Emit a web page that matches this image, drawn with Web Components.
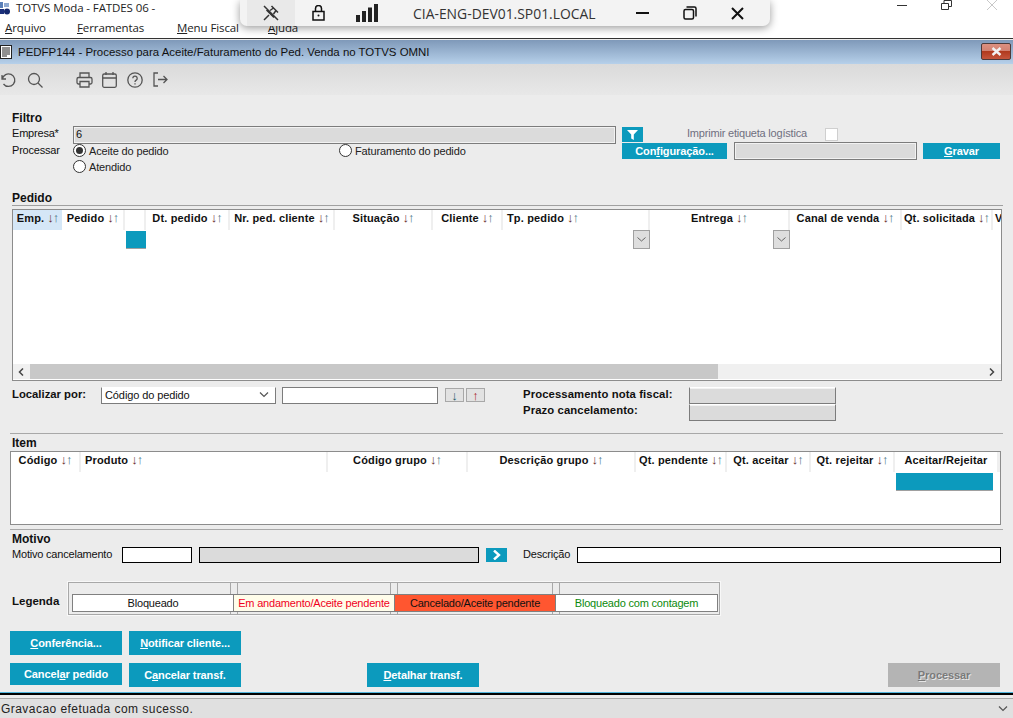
<!DOCTYPE html>
<html lang="pt-BR">
<head>
<meta charset="utf-8">
<title>PEDFP144</title>
<style>
  html, body { margin: 0; padding: 0; height: 718px; overflow: hidden; background: #ececec; }
  body { font: 11px "Liberation Sans", Arial, sans-serif; color: #111; }
</style>
</head>
<body>
<tv-app>
  <win-chrome></win-chrome>
  <rdp-bar></rdp-bar>
  <form-title>PEDFP144 - Processo para Aceite/Faturamento do Ped. Venda no TOTVS OMNI</form-title>
  <tool-bar></tool-bar>
  <form-body>
    <sec-head style="margin:16px 0 0 12px">Filtro</sec-head>
    <form-row h="17" style="margin-left:12px">
      <tv-label w="61">Empresa*</tv-label>
      <tv-input w="543" h="18" kind="off">6</tv-input>
      <tv-button w="21" h="15" style="margin:1px 0 0 6px"><svg width="11" height="11" viewBox="0 0 11 11"><path d="M0 1h11L6.800 5.600V11L4.200 9.400V5.600z" fill="#fff"/></svg></tv-button>
      <tv-label w="138" style="margin-left:44px;color:#6f6f80">Imprimir etiqueta logística</tv-label>
      <tv-check></tv-check>
    </form-row>
    <form-row h="17" style="margin-left:12px">
      <tv-label w="61">Processar</tv-label>
      <tv-radio w="266" checked>Aceite do pedido</tv-radio>
      <tv-radio w="283">Faturamento do pedido</tv-radio>
      <tv-button w="105" h="16">Con<u>f</u>iguração...</tv-button>
      <tv-input w="183" h="18" kind="off" style="margin:-1px 0 0 7px"></tv-input>
      <tv-button w="77" h="16" style="margin-left:6px"><u>G</u>ravar</tv-button>
    </form-row>
    <form-row h="15" style="margin:-1px 0 0 73px">
      <tv-radio w="100">Atendido</tv-radio>
    </form-row>

    <sec-head lined style="margin:17px 0 0 12px;width:991px">Pedido</sec-head>
    <data-table style="margin:3px 0 0 12px;width:990px;height:172px"
      cols="49 63 21 84 105 98 70 147 140 112 91 8">
      <col-head active sort>Emp.</col-head>
      <col-head sort>Pedido</col-head>
      <col-head></col-head>
      <col-head sort>Dt. pedido</col-head>
      <col-head sort>Nr. ped. cliente</col-head>
      <col-head sort>Situação</col-head>
      <col-head sort>Cliente</col-head>
      <col-head sort left>Tp. pedido</col-head>
      <col-head sort>Entrega</col-head>
      <col-head sort>Canal de venda</col-head>
      <col-head sort>Qt. solicitada</col-head>
      <col-head left last>V</col-head>
      <row-mark slot="row" col="3"></row-mark>
      <row-drop slot="row" col="8"></row-drop>
      <row-drop slot="row" col="9"></row-drop>
      <h-scroll slot="foot"></h-scroll>
    </data-table>

    <form-row h="34" style="margin:6px 0 0 12px">
      <tv-label w="89" bold>Localizar por:</tv-label>
      <tv-select w="175">Código do pedido</tv-select>
      <tv-input w="156" h="17" style="margin-left:6px"></tv-input>
      <arrow-btn dir="down" style="margin:1px 0 0 7px"></arrow-btn>
      <arrow-btn dir="up" style="margin:1px 0 0 2px"></arrow-btn>
      <info-pair style="margin-left:38px"></info-pair>
    </form-row>

    <sec-line style="margin:12px 0 0 10px;width:993px"></sec-line>
    <sec-head style="margin:2px 0 0 12px">Item</sec-head>
    <data-table style="margin:0 0 0 10px;width:991px;height:74px"
      cols="70 247 140 168 91 84 84 104 2">
      <col-head sort>Código</col-head>
      <col-head sort left>Produto</col-head>
      <col-head sort>Código grupo</col-head>
      <col-head sort>Descrição grupo</col-head>
      <col-head sort>Qt. pendente</col-head>
      <col-head sort>Qt. aceitar</col-head>
      <col-head sort>Qt. rejeitar</col-head>
      <col-head>Aceitar/Rejeitar</col-head>
      <col-head></col-head>
      <row-mark slot="row" col="8" wide></row-mark>
    </data-table>

    <sec-line style="margin:4px 0 0 10px;width:993px"></sec-line>
    <sec-head style="margin:2px 0 0 12px">Motivo</sec-head>
    <form-row h="16" style="margin:0 0 0 12px">
      <tv-label w="110">Motivo cancelamento</tv-label>
      <tv-input w="70" h="16" kind="dark"></tv-input>
      <tv-input w="280" h="16" kind="dark-off" style="margin-left:7px"></tv-input>
      <tv-button w="21" h="14" style="margin:1px 0 0 7px"><svg width="10" height="10" viewBox="0 0 10 10"><path d="M2 .5 7 5 2 9.500" fill="none" stroke="#fff" stroke-width="2.400"/></svg></tv-button>
      <tv-label w="54" style="margin-left:16px">Descrição</tv-label>
      <tv-input w="424" h="16" kind="dark"></tv-input>
    </form-row>

    <form-row h="33" style="margin:19px 0 0 12px">
      <tv-label w="56" bold style="margin-top:12px;letter-spacing:0;font-size:11.500px">Legenda</tv-label>
      <legend-box>
        <legend-cell w="162">Bloqueado</legend-cell>
        <legend-cell w="161" style="background:#fffdea;color:#f0001c">Em andamento/Aceite pendente</legend-cell>
        <legend-cell w="161" style="background:#ff5630;color:#111">Cancelado/Aceite pendente</legend-cell>
        <legend-cell w="162" style="color:#0c8a0c">Bloqueado com contagem</legend-cell>
      </legend-box>
    </form-row>

    <form-row h="24" style="margin:16px 0 0 10px">
      <tv-button w="112" h="24"><u>C</u>onferência...</tv-button>
      <tv-button w="112" h="24" style="margin-left:7px"><u>N</u>otificar cliente...</tv-button>
    </form-row>
    <form-row h="24" style="margin:8px 0 0 10px">
      <tv-button w="112" h="22">Cancel<u>a</u>r pedido</tv-button>
      <tv-button w="112" h="24" style="margin-left:7px">C<u>a</u>ncelar transf.</tv-button>
      <tv-button w="112" h="24" style="margin-left:126px"><u>D</u>etalhar transf.</tv-button>
      <tv-button w="112" h="24" kind="off" style="margin-left:409px"><u>P</u>rocessar</tv-button>
    </form-row>
  </form-body>
  <status-bar>Gravacao efetuada com sucesso.</status-bar>
</tv-app>

<script>
// small helper, every element below makes its shadow root the same way
function shadow(el, html) {
  el.attachShadow({ mode: 'open' }).innerHTML = html;
}
function sized(el) {
  if (el.hasAttribute('w')) el.style.width = el.getAttribute('w') + 'px';
  if (el.hasAttribute('h')) el.style.height = el.getAttribute('h') + 'px';
}

class TvApp extends HTMLElement {
  connectedCallback() {
    shadow(this, `<style>
      :host { display: flex; flex-direction: column; position: relative; width: 1013px; height: 718px; overflow: hidden; }
    </style><slot></slot>`);
  }
}

class WinChrome extends HTMLElement {
  connectedCallback() {
    shadow(this, `<style>
      :host { display: block; height: 38px; background: #fff; border-bottom: 1px solid #333; margin-bottom: 1px; font: 11.500px "Open Sans", "Noto Sans", sans-serif; letter-spacing: -.1px; color: #222; }
      .title { display: flex; align-items: center; height: 14px; padding-top: 1px; }
      .title svg { margin-right: 6px; }
      .title span { line-height: 14px; }
      nav { display: flex; margin-top: 5px; line-height: 16px; }
      nav span { white-space: nowrap; }
      .ctl { position: absolute; top: 0; right: 0; height: 12px; }
      .ctl svg { position: absolute; top: 0; }
      u { text-underline-offset: 1px; }
    </style>
    <div class="title">
      <svg width="10" height="13" viewBox="0 0 10 13"><rect x="0" y="0" width="3" height="6" fill="#5a7fb8"/><rect x="4" y="1" width="5" height="4" fill="#8fa9d0"/><rect x="0" y="7" width="4" height="5" fill="#1b2f7a"/><circle cx="7" cy="9.500" r="3" fill="#14286e"/></svg>
      <span>TOTVS Moda - FATDES 06 -</span>
    </div>
    <nav>
      <span style="margin-left:5px;width:72px"><u>A</u>rquivo</span>
      <span style="width:100px"><u>F</u>erramentas</span>
      <span style="width:91px"><u>M</u>enu Fiscal</span>
      <span><u>A</u>juda</span>
    </nav>
    <div class="ctl" style="width:120px">
      <svg style="left:3px" width="12" height="10"><path d="M1 5.500h10" stroke="#333"/></svg>
      <svg style="left:48px" width="12" height="10"><path d="M.5 3.500h7v6h-7zM3 3V.5h7.500v6H8" fill="none" stroke="#333"/></svg>
      <svg style="left:93px" width="12" height="11"><path d="M1 0l10 10M11 0L1 10" stroke="#c8c8c8"/></svg>
    </div>`);
  }
}

class RdpBar extends HTMLElement {
  connectedCallback() {
    shadow(this, `<style>
      :host { position: absolute; left: 240px; top: 0; width: 530px; height: 26px; display: flex; align-items: center; background: #f3f3f3; border-radius: 0 0 7px 7px; box-shadow: 0 2px 8px rgba(0,0,0,.4); font: 13.900px "Open Sans", "Noto Sans", sans-serif; color: #333; }
      .pin { width: 48px; height: 26px; margin-left: 7px; background: #e9e9e9; display: flex; align-items: center; justify-content: center; }
      svg { display: block; flex: none; }
      .name { margin-left: 34px; width: 191px; white-space: nowrap; }
    </style>
    <div class="pin"><svg width="18" height="18" viewBox="0 0 18 18" fill="none" stroke="#333" stroke-width="1.500"><path d="M2 2 16 16M9.500 2 16 8.500M11.500 4 8 6.500M14 6.500 11.500 10M4.500 6 12 13.500M7 11l-5 5"/></svg></div>
    <svg style="margin-left:17px" width="13" height="16" viewBox="0 0 13 16" fill="none" stroke="#111" stroke-width="1.500"><rect x="1" y="6.500" width="11" height="8.500"/><path d="M3.500 6.500V3.500a3 3 0 0 1 6 0v3"/><circle cx="6.500" cy="10.500" r="1" fill="#111" stroke="none"/></svg>
    <svg style="margin-left:31px" width="23" height="18" viewBox="0 0 23 18" fill="#222"><rect x="0" y="11" width="4" height="7"/><rect x="6" y="7" width="4" height="11"/><rect x="12" y="3.500" width="4" height="14.500"/><rect x="18" y="0" width="4" height="18"/></svg>
    <span class="name">CIA-ENG-DEV01.SP01.LOCAL</span>
    <svg style="margin-left:32px" width="13" height="4"><path d="M0 2h13" stroke="#111" stroke-width="2"/></svg>
    <svg style="margin-left:34px" width="14" height="14" viewBox="0 0 14 14" fill="none" stroke="#111" stroke-width="1.500"><rect x="1" y="3.500" width="9.500" height="9.500" rx="1.500"/><path d="M3.500 1h8a1.500 1.500 0 0 1 1.500 1.500v8"/></svg>
    <svg style="margin-left:34px" width="13" height="13" viewBox="0 0 13 13"><path d="M1 1l11 11M12 1 1 12" stroke="#111" stroke-width="2"/></svg>`);
  }
}

class FormTitle extends HTMLElement {
  connectedCallback() {
    shadow(this, `<style>
      :host { display: flex; align-items: center; height: 24px; flex: none; position: relative; background: linear-gradient(#7f99b9, #b6d0ea); font: 11.450px "Liberation Sans", sans-serif; color: #111; }
      .doc { margin: 0 6px 0 0; }
      .close { position: absolute; right: 2px; top: 3px; width: 30px; height: 17px; box-sizing: border-box; border: 1px solid #4d3a3a; border-radius: 2px; background: linear-gradient(#dc9080 0, #d28272 45%, #b13a1e 50%, #c5553c 100%); display: flex; align-items: center; justify-content: center; }
    </style>
    <svg class="doc" width="12" height="14" viewBox="0 0 12 14"><rect x=".5" y=".5" width="11" height="13" fill="#fff" stroke="#222"/><path d="M2 3h8M2 5h8M2 7h8M2 9h8M2 11h5" stroke="#222"/></svg>
    <slot></slot>
    <div class="close"><svg width="11" height="9" viewBox="0 0 11 9"><path d="M1.500 1l8 7M9.500 1l-8 7" stroke="#f2f2f2" stroke-width="2.400"/></svg></div>`);
  }
}

class ToolBar extends HTMLElement {
  connectedCallback() {
    shadow(this, `<style>
      :host { display: flex; height: 31px; flex: none; align-items: center; background: linear-gradient(#dadada, #e8e8e8); box-sizing: border-box; }
      svg { display: block; fill: none; stroke: #555; stroke-width: 1.300; }
    </style>
    <svg style="margin-left:0" width="17" height="16" viewBox="0 0 16 16"><path d="M1.500 3v4h4M1.800 7A6.300 6.300 0 1 1 3 12"/></svg>
    <svg style="margin-left:10px" width="16" height="16" viewBox="0 0 16 16"><circle cx="7" cy="7" r="5.500"/><path d="M11 11l4.500 4.500"/></svg>
    <svg style="margin-left:33px" width="17" height="16" viewBox="0 0 17 16"><path d="M4 5V1h9v4M4 12H2.500A1.500 1.500 0 0 1 1 10.500V7A1.500 1.500 0 0 1 2.500 5.500h12A1.500 1.500 0 0 1 16 7v3.500a1.500 1.500 0 0 1-1.500 1.500H13M4 9.500h9V15H4z"/></svg>
    <svg style="margin-left:9px" width="15" height="16" viewBox="0 0 15 16"><rect x=".7" y="2" width="13.600" height="13.300" rx="1.500"/><path d="M.7 6h13.600M4 0v3M11 0v3"/></svg>
    <svg style="margin-left:10px" width="16" height="16" viewBox="0 0 16 16"><circle cx="8" cy="8" r="7.200"/><path d="M5.800 6.200a2.200 2.200 0 1 1 3.400 1.900c-.8.500-1.200 1-1.200 1.900M8 11.300v1.200"/></svg>
    <svg style="margin-left:10px" width="15" height="15" viewBox="0 0 15 15"><path d="M5 1H1v13h4M5 7.500h9M10.500 4l3.500 3.500L10.500 11"/></svg>`);
  }
}

class FormBody extends HTMLElement {
  connectedCallback() {
    shadow(this, `<style>
      :host { display: block; height: 597px; flex: none; overflow: hidden; background: #ececec; }
    </style><slot></slot>`);
  }
}

class SecHead extends HTMLElement {
  connectedCallback() {
    shadow(this, `<style>
      :host { display: block; font: bold 12px/15px "Liberation Sans", sans-serif; height: 15px; color: #111; }
      :host([lined]) { height: 14px; border-bottom: 1px solid #a0a0a0; }
    </style><slot></slot>`);
  }
}

class SecLine extends HTMLElement {
  connectedCallback() {
    shadow(this, `<style>:host { display: block; height: 0; border-top: 1px solid #a8a8a8; }</style>`);
  }
}

class FormRow extends HTMLElement {
  connectedCallback() {
    shadow(this, `<style>:host { display: flex; align-items: flex-start; }</style><slot></slot>`);
    sized(this);
  }
}

class TvLabel extends HTMLElement {
  connectedCallback() {
    shadow(this, `<style>
      :host { display: block; flex: none; line-height: 15px; white-space: nowrap; font-size: 11px; letter-spacing: -.2px; }
      :host([bold]) { font-weight: bold; font-size: 11.300px; letter-spacing: 0; }
    </style><slot></slot>`);
    sized(this);
  }
}

class TvInput extends HTMLElement {
  connectedCallback() {
    shadow(this, `<style>
      :host { display: block; flex: none; box-sizing: border-box; background: #fff; border: 1px solid #7c7c7c; padding-left: 2px; font-size: 11px; line-height: 15px; }
      :host([kind="off"]) { background: #dbdbdb; box-shadow: inset 0 0 0 1px #f2f2f2; }
      :host([kind="dark"]) { border-color: #000; }
      :host([kind="dark-off"]) { border-color: #000; background: #dbdbdb; }
    </style><slot></slot>`);
    sized(this);
  }
}

class TvSelect extends HTMLElement {
  connectedCallback() {
    shadow(this, `<style>
      :host { display: flex; flex: none; justify-content: space-between; align-items: center; box-sizing: border-box; height: 17px; background: #fff; border: 1px solid #7c7c7c; border-top-color: #fff; padding: 0 6px 1px 3px; font-size: 11px; letter-spacing: -.1px; }
      svg { display: block; }
    </style><slot></slot><svg width="10" height="6"><path d="M1 .5 5 4.500 9 .5" fill="none" stroke="#555" stroke-width="1.200"/></svg>`);
    sized(this);
  }
}

class TvRadio extends HTMLElement {
  connectedCallback() {
    shadow(this, `<style>
      :host { display: flex; flex: none; align-items: center; height: 15px; font-size: 11px; letter-spacing: -.15px; white-space: nowrap; color: #222; }
      .dot { box-sizing: border-box; width: 13px; height: 13px; border-radius: 50%; border: 1px solid #333; background: #fff; margin-right: 3px; display: flex; align-items: center; justify-content: center; }
      :host([checked]) .dot::after { content: ""; width: 7px; height: 7px; border-radius: 50%; background: #333; }
    </style><span class="dot"></span><slot></slot>`);
    sized(this);
  }
}

class TvCheck extends HTMLElement {
  connectedCallback() {
    shadow(this, `<style>
      :host { display: block; flex: none; box-sizing: border-box; width: 13px; height: 13px; margin-top: 2px; background: #fff; border: 1px solid #cfcfcf; }
    </style>`);
  }
}

class TvButton extends HTMLElement {
  connectedCallback() {
    shadow(this, `<style>
      :host { display: flex; flex: none; align-items: center; justify-content: center; background: #0c9abd; color: #fff; font: bold 11px "Liberation Sans", sans-serif; letter-spacing: -.1px; white-space: nowrap; }
      :host([kind="off"]) { background: #b4b4b4; color: #7a7a7a; text-shadow: 1px 1px 0 #e6e6e6; }
    </style><slot></slot>`);
    sized(this);
  }
}

class ArrowBtn extends HTMLElement {
  connectedCallback() {
    const down = this.getAttribute('dir') === 'down';
    shadow(this, `<style>
      :host { display: flex; flex: none; align-items: center; justify-content: center; box-sizing: border-box; width: 19px; height: 14px; background: #e2e2e2; border: 1px solid #a8a8a8; }
      span { font: bold 13px "Liberation Sans", sans-serif; }
    </style><span style="color:${down ? '#1c5f6a' : '#a81f1f'}">${down ? '↓' : '↑'}</span>`);
  }
}

class InfoPair extends HTMLElement {
  connectedCallback() {
    shadow(this, `<style>
      :host { display: grid; grid-template-columns: 166px 147px; grid-auto-rows: 17px; font: bold 11.300px/15px "Liberation Sans", sans-serif; letter-spacing: .1px; white-space: nowrap; }
      .box { box-sizing: border-box; background: #dbdbdb; border: 1px solid #7c7c7c; border-top-color: #fff; box-shadow: inset 0 1px 0 #f2f2f2; }
      .low { margin-top: -1px; }
    </style>
    <span>Processamento nota fiscal:</span><div class="box"></div>
    <span class="low">Prazo cancelamento:</span><div class="box"></div>`);
  }
}

class DataTable extends HTMLElement {
  connectedCallback() {
    const cols = this.getAttribute('cols').split(' ').map(c => c + 'px').join(' ');
    shadow(this, `<style>
      :host { display: flex; flex-direction: column; box-sizing: border-box; background: #fff; border: 1px solid #8c8c8c; overflow: hidden; }
      .head, .row { display: grid; grid-template-columns: ${cols}; flex: none; }
      .head { height: 20px; }
      .row { height: 19px; }
      .fill { flex: 1; }
    </style>
    <div class="head"><slot></slot></div>
    <div class="row"><slot name="row"></slot></div>
    <div class="fill"></div>
    <slot name="foot"></slot>`);
  }
}

class ColHead extends HTMLElement {
  connectedCallback() {
    const arrows = this.hasAttribute('sort')
      ? '<span class="dn">↓</span><span class="up">↑</span>' : '';
    shadow(this, `<style>
      :host { display: flex; justify-content: center; align-items: center; min-width: 0; overflow: hidden; border-right: 2px solid #efefef; box-sizing: border-box; font: bold 11px "Liberation Sans", sans-serif; letter-spacing: .15px; white-space: nowrap; color: #111; padding-bottom: 5px; }
      :host([left]) { justify-content: flex-start; padding-left: 4px; }
      :host([active]) { background: #d5e7f7; border-right: 0; }
      :host([last]) { border-right: 0; padding-left: 2px; }
      .arrows { margin-left: 3px; font: bold 13px/13px "Liberation Sans", sans-serif; letter-spacing: -1px; }
      .dn { color: #6a2f2f; } .up { color: #4c7484; }
    </style><slot></slot>${arrows ? `<span class="arrows">${arrows}</span>` : ''}`);
  }
}

class RowMark extends HTMLElement {
  connectedCallback() {
    const col = this.getAttribute('col');
    shadow(this, `<style>
      :host { display: block; background: #0c9abd; border-bottom: 1px solid #a0a0a0; margin: 1px 0 0 1px; box-sizing: border-box; grid-column: ${col}; grid-row: 1; }
      :host([wide]) { margin-right: 6px; }
    </style>`);
  }
}

class RowDrop extends HTMLElement {
  connectedCallback() {
    const col = this.getAttribute('col');
    shadow(this, `<style>
      :host { display: flex; align-items: center; justify-content: center; box-sizing: border-box; width: 17px; height: 19px; justify-self: end; background: #dedede; border: 1px solid #a0a0a0; grid-column: ${col}; grid-row: 1; }
    </style><svg width="9" height="5"><path d="M.5.5 4.500 4 8.500.5" fill="none" stroke="#666"/></svg>`);
  }
}

class HScroll extends HTMLElement {
  connectedCallback() {
    shadow(this, `<style>
      :host { display: flex; align-items: center; height: 15px; flex: none; background: #f0f0f0; margin-bottom: 1px; }
      .thumb { width: 688px; height: 15px; background: #c8c8c8; }
      svg { display: block; flex: none; }
    </style>
    <svg style="margin-left:5px" width="6" height="8"><path d="M5 .5 1.500 4 5 7.500" fill="none" stroke="#444" stroke-width="1.500"/></svg>
    <div class="thumb" style="margin-left:6px"></div>
    <svg style="margin-left:271px" width="6" height="8"><path d="M1 .5 4.500 4 1 7.500" fill="none" stroke="#444" stroke-width="1.500"/></svg>`);
  }
}

class LegendBox extends HTMLElement {
  connectedCallback() {
    // the group box shows thin column rules above and below the cells
    const rules = [161, 168, 321, 328, 483, 490]
      .map(x => `linear-gradient(#a8a8a8,#a8a8a8) ${x}px 0/1px 100% no-repeat`).join(',');
    shadow(this, `<style>
      :host { display: flex; box-sizing: border-box; width: 652px; height: 33px; border: 1px solid #a8a8a8; outline: 1px solid #f8f8f8; padding: 11px 1px 2px 3px; background: ${rules}; }
    </style><slot></slot>`);
  }
}

class LegendCell extends HTMLElement {
  connectedCallback() {
    shadow(this, `<style>
      :host { display: flex; align-items: center; justify-content: center; flex: none; box-sizing: border-box; height: 18px; background: #fff; border: 1px solid #808080; border-left-width: 0; font-size: 11px; letter-spacing: -.2px; white-space: nowrap; }
      :host(:first-child) { border-left-width: 1px; }
    </style><slot></slot>`);
    sized(this);
  }
}

class StatusBar extends HTMLElement {
  connectedCallback() {
    shadow(this, `<style>
      :host { display: flex; flex-direction: column; flex: none; height: 26px; background: #ececec; }
      .cyan { height: 1px; background: #4fb4dc; flex: none; }
      .black { height: 2px; background: #000; flex: none; }
      .bar { flex: 1; margin-top: 3px; border-top: 1px solid #a8a8a8; background: #e0e0e0; display: flex; align-items: center; justify-content: space-between; padding: 1px 5px 0 1px; font-size: 12px; letter-spacing: .45px; color: #222; }
    </style>
    <div class="cyan"></div><div class="black"></div>
    <div class="bar"><slot></slot><svg width="10" height="6"><path d="M1 .5 5 4.500 9 .5" fill="none" stroke="#555" stroke-width="1.200"/></svg></div>`);
  }
}

customElements.define('tv-app', TvApp);
customElements.define('win-chrome', WinChrome);
customElements.define('rdp-bar', RdpBar);
customElements.define('form-title', FormTitle);
customElements.define('tool-bar', ToolBar);
customElements.define('form-body', FormBody);
customElements.define('sec-head', SecHead);
customElements.define('sec-line', SecLine);
customElements.define('form-row', FormRow);
customElements.define('tv-label', TvLabel);
customElements.define('tv-input', TvInput);
customElements.define('tv-select', TvSelect);
customElements.define('tv-radio', TvRadio);
customElements.define('tv-check', TvCheck);
customElements.define('tv-button', TvButton);
customElements.define('arrow-btn', ArrowBtn);
customElements.define('info-pair', InfoPair);
customElements.define('data-table', DataTable);
customElements.define('col-head', ColHead);
customElements.define('row-mark', RowMark);
customElements.define('row-drop', RowDrop);
customElements.define('h-scroll', HScroll);
customElements.define('legend-box', LegendBox);
customElements.define('legend-cell', LegendCell);
customElements.define('status-bar', StatusBar);
</script>
</body>
</html>
